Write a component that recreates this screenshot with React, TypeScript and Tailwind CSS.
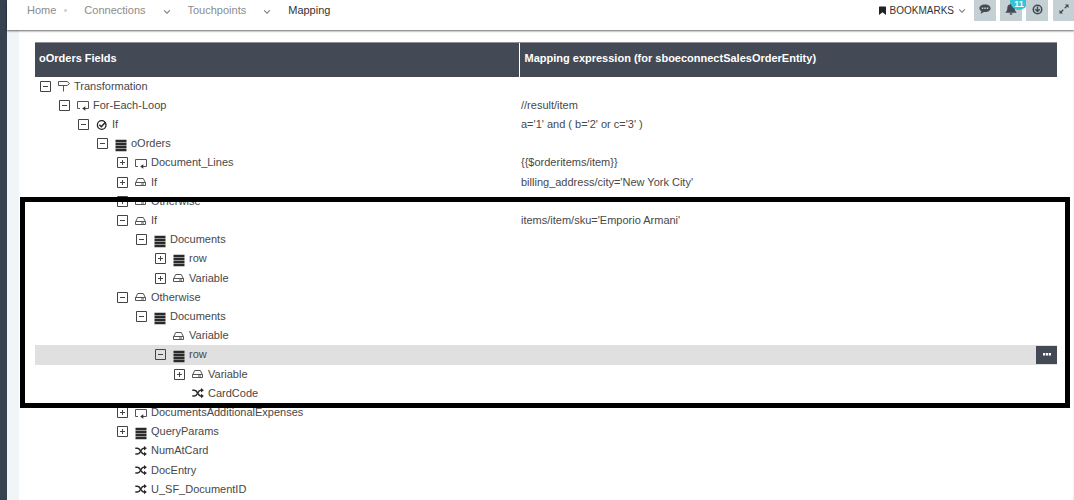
import React from "react";

type IconName = "sign" | "loop" | "check" | "list" | "drive" | "shuffle";

type Row = {
  level: number;
  toggle?: "open" | "closed";
  icon: IconName;
  name: string;
  expression?: string;
  selected?: boolean;
};

const rows: Row[] = [
  { level: 0, toggle: "open", icon: "sign", name: "Transformation" },
  { level: 1, toggle: "open", icon: "loop", name: "For-Each-Loop", expression: "//result/item" },
  { level: 2, toggle: "open", icon: "check", name: "If", expression: "a='1' and ( b='2' or c='3' )" },
  { level: 3, toggle: "open", icon: "list", name: "oOrders" },
  { level: 4, toggle: "closed", icon: "loop", name: "Document_Lines", expression: "{{$orderitems/item}}" },
  { level: 4, toggle: "closed", icon: "drive", name: "If", expression: "billing_address/city='New York City'" },
  { level: 4, toggle: "closed", icon: "drive", name: "Otherwise" },
  { level: 4, toggle: "open", icon: "drive", name: "If", expression: "items/item/sku='Emporio Armani'" },
  { level: 5, toggle: "open", icon: "list", name: "Documents" },
  { level: 6, toggle: "closed", icon: "list", name: "row" },
  { level: 6, toggle: "closed", icon: "drive", name: "Variable" },
  { level: 4, toggle: "open", icon: "drive", name: "Otherwise" },
  { level: 5, toggle: "open", icon: "list", name: "Documents" },
  { level: 6, icon: "drive", name: "Variable" },
  { level: 6, toggle: "open", icon: "list", name: "row", selected: true },
  { level: 7, toggle: "closed", icon: "drive", name: "Variable" },
  { level: 7, icon: "shuffle", name: "CardCode" },
  { level: 4, toggle: "closed", icon: "loop", name: "DocumentsAdditionalExpenses" },
  { level: 4, toggle: "closed", icon: "list", name: "QueryParams" },
  { level: 4, icon: "shuffle", name: "NumAtCard" },
  { level: 4, icon: "shuffle", name: "DocEntry" },
  { level: 4, icon: "shuffle", name: "U_SF_DocumentID" },
];

const indents = [
  "pl-[5px]",
  "pl-[24px]",
  "pl-[43px]",
  "pl-[62px]",
  "pl-[82px]",
  "pl-[101px]",
  "pl-[120px]",
  "pl-[139px]",
];

function NodeIcon({ name }: { name: IconName }) {
  return (
    <svg viewBox="0 0 12 12" className="h-3 w-3 shrink-0 overflow-visible" fill="none" stroke="#555" aria-hidden="true">
      {name === "sign" && (
        <path d="M0.500 1.500h8.700l2.300 2-2.300 2H0.500zM5.500 5.500V11.500" />
      )}
      {name === "loop" && (
        <>
          <path d="M3 9.500H0.500V2.500h11v7H8" />
          <path d="M8.300 7.300v4.400L5.200 9.500z" fill="#333" stroke="none" />
        </>
      )}
      {name === "check" && (
        <>
          <circle cx="5.700" cy="6" r="4.300" stroke="#222" strokeWidth="1.300" />
          <path d="M3.400 5.800l1.900 1.900 4.200-4.400" stroke="#222" strokeWidth="1.500" />
        </>
      )}
      {name === "list" && (
        <path d="M0.500 3h11M0.500 6h11M0.500 9h11M0.500 12h11" stroke="#2a2a2a" strokeWidth="2.400" />
      )}
      {name === "drive" && (
        <path d="M0.800 6.500L2.700 2.500h5.600l2 4M0.500 6.500h10v3h-10zM6 8h3" />
      )}
      {name === "shuffle" && (
        <>
          <path d="M0.300 3.200h2.200c3.200 0 3.200 5.800 6.200 5.800H10M0.300 9h2.200c3.200 0 3.200-5.800 6.200-5.800H10" stroke="#2a2a2a" strokeWidth="1.500" />
          <path d="M9 0.900l2.900 2.300L9 5.500zM9 6.700L11.900 9 9 11.300z" fill="#2a2a2a" stroke="none" />
        </>
      )}
    </svg>
  );
}

function Toggle({ state, label }: { state: "open" | "closed"; label: string }) {
  return (
    <button
      type="button"
      aria-label={(state === "open" ? "Collapse " : "Expand ") + label}
      aria-expanded={state === "open"}
      className="block h-[11px] w-[11px] shrink-0"
    >
      <svg viewBox="0 0 11 11" className="block h-[11px] w-[11px]" fill="none" stroke="#444">
        <path d="M0.500 0.500h10v10h-10z" />
        <path d="M3 5.500h5" />
        {state === "closed" && <path d="M5.500 3v5" />}
      </svg>
    </button>
  );
}

function Chevron() {
  return (
    <svg viewBox="0 0 8 6" className="h-[6px] w-2 shrink-0 text-[#777]" fill="none" stroke="currentColor" strokeWidth="1.100" aria-hidden="true">
      <path d="M1.200 1.300L4 4.300l2.800-3" />
    </svg>
  );
}

function ToolButton({ label, children }: { label: string; children: React.ReactNode }) {
  return (
    <button
      type="button"
      aria-label={label}
      className="relative flex h-[21px] w-[22px] shrink-0 items-center justify-center bg-[#c5d0d4] pb-[3px] text-[#454b55]"
    >
      {children}
    </button>
  );
}

function TopBar() {
  return (
    <header className="relative z-10 flex h-[30px] items-start justify-between bg-white shadow-[0_1px_2px_0_rgba(0,0,0,0.6)]">
      <nav aria-label="Breadcrumb" className="flex h-[21px] items-center pl-5 text-[11px] text-[#8b8b8b]">
        <a href="#home">Home</a>
        <span className="ml-2 h-[3px] w-[3px] rounded-full bg-[#d0d0d0]" />
        <a href="#connections" className="ml-[17px]">Connections</a>
        <button type="button" aria-label="Connections menu" className="ml-[17px] flex pt-[2px]">
          <Chevron />
        </button>
        <a href="#touchpoints" className="ml-[17px]">Touchpoints</a>
        <button type="button" aria-label="Touchpoints menu" className="ml-[17px] flex pt-[2px]">
          <Chevron />
        </button>
        <a href="#mapping" aria-current="page" className="ml-[17px] text-[#333]">Mapping</a>
      </nav>
      <div className="flex items-start">
        <button type="button" className="flex h-[21px] items-center text-[10px] text-[#333]">
          <svg viewBox="0 0 7 9" className="h-[9px] w-[7px]" fill="#222" aria-hidden="true">
            <path d="M0.600 0.400h5.800q.6 0 .6.600v8L3.500 6.200 0 9V1q0-.6.600-.6z" />
          </svg>
          <span className="ml-1 mr-1">BOOKMARKS</span>
          <Chevron />
        </button>
        <div className="-mr-[1px] ml-2 flex gap-1">
          <ToolButton label="Messages">
            <svg viewBox="0 0 12 10" className="h-[10px] w-3">
              <path d="M6 0.500c3.200 0 5.600 1.600 5.600 3.800S9.200 8.100 6 8.100c-.4 0-.8 0-1.200-.1C3.900 8.900 2.600 9.500 1.300 9.600c.6-.7 1-1.400 1.100-2.300C1.200 6.600.4 5.500.4 4.300.4 2.100 2.800.5 6 .5z" fill="currentColor" />
              <path d="M2.800 3.600h1.500v1.400H2.800zM5.300 3.600h1.500v1.400H5.300zM7.800 3.600h1.500v1.400H7.800z" fill="#c5d0d4" />
            </svg>
          </ToolButton>
          <ToolButton label="Notifications">
            <svg viewBox="0 0 12 12" className="h-3 w-3" fill="currentColor">
              <path d="M6 0.300c.5 0 .8.4.8.9 1.900.4 2.900 1.900 2.900 3.800 0 2.300.6 3.200 1.800 4.200v.6H.5v-.6C1.700 8.200 2.300 7.300 2.300 5c0-1.900 1-3.400 2.900-3.800 0-.5.3-.9.8-.9zM4.500 10.200h3c0 .9-.6 1.500-1.500 1.500s-1.500-.6-1.500-1.500z" />
            </svg>
            <span className="absolute -top-2 left-[10px] flex h-[18px] w-[18px] items-end justify-center rounded-full bg-[#36c3d3] pb-[2px] text-[9px] font-bold leading-[8px] text-white">
              11
            </span>
          </ToolButton>
          <ToolButton label="Downloads">
            <svg viewBox="0 0 12 12" className="h-[11px] w-[11px]" fill="none" stroke="currentColor" strokeWidth="1.700">
              <circle cx="6" cy="6" r="4.600" />
              <path d="M6 2.800v5M3.500 5.700L6 8.200l2.500-2.500" />
            </svg>
          </ToolButton>
          <div className="ml-[1px] flex">
            <ToolButton label="Full screen">
              <svg viewBox="0 0 11 11" className="h-[10px] w-[10px]">
                <path d="M6.300 4.700L9 2M4.700 6.300L2 9" fill="none" stroke="currentColor" strokeWidth="1.400" />
                <path d="M6.500.5h4v4zM.5 6.500v4h4z" fill="currentColor" />
              </svg>
            </ToolButton>
          </div>
        </div>
      </div>
    </header>
  );
}

export default function App() {
  return (
    <div className="flex min-h-screen overflow-x-hidden bg-[#f1f5f7] font-['Liberation_Sans',Arial,sans-serif]">
      <aside className="w-[7px] shrink-0 bg-[#364250]" />
      <div className="flex min-w-0 flex-1 flex-col">
        <TopBar />
        <main className="relative ml-3 mr-[1px] flex flex-1 flex-col bg-white pl-4 pr-4 pt-3 pb-[1px]">
          <table className="w-full flex-1 table-fixed border-collapse text-[11px] leading-[15px] text-[#484848]">
            <thead>
              <tr className="h-[34px] bg-[#444a55] text-left text-white">
                <th scope="col" className="w-[484px] border-t border-[#8d9095] p-0 pb-[3px] pl-1">
                  oOrders Fields
                </th>
                <th scope="col" className="border-t border-l border-t-[#8d9095] border-l-white p-0 pb-[3px] pl-[5px]">
                  Mapping expression (for sboeconnectSalesOrderEntity)
                </th>
              </tr>
            </thead>
            <tbody>
              {rows.map((row, i) => (
                <tr key={i} className={row.selected ? "h-[18px] bg-[#e0e0e0]" : "h-[18px]"}>
                  <td className="p-0">
                    <div className={"flex items-center " + indents[row.level]}>
                      {row.toggle ? (
                        <Toggle state={row.toggle} label={row.name} />
                      ) : (
                        <span className="w-[11px] shrink-0" />
                      )}
                      <span className="ml-[7px] mr-1 flex">
                        <NodeIcon name={row.icon} />
                      </span>
                      <span className="whitespace-nowrap">{row.name}</span>
                    </div>
                  </td>
                  <td className="p-0">
                    <div className="flex items-center justify-between pl-[2px]">
                      <span>{row.expression}</span>
                      {row.selected && (
                        <button
                          type="button"
                          aria-label="Row actions"
                          className="flex h-[18px] w-[21px] items-center justify-center bg-[#444a55]"
                        >
                          <svg viewBox="0 0 8 3" className="h-[3px] w-2" fill="#fff" aria-hidden="true">
                            <path d="M0 0h2.200v2.500H0zM2.900 0h2.200v2.500H2.900zM5.800 0H8v2.500H5.800z" />
                          </svg>
                        </button>
                      )}
                    </div>
                  </td>
                </tr>
              ))}
            </tbody>
          </table>
          <div className="pointer-events-none absolute left-[1px] right-[3px] top-[167px] h-[211px] border-[5px] border-black" />
        </main>
      </div>
    </div>
  );
}
